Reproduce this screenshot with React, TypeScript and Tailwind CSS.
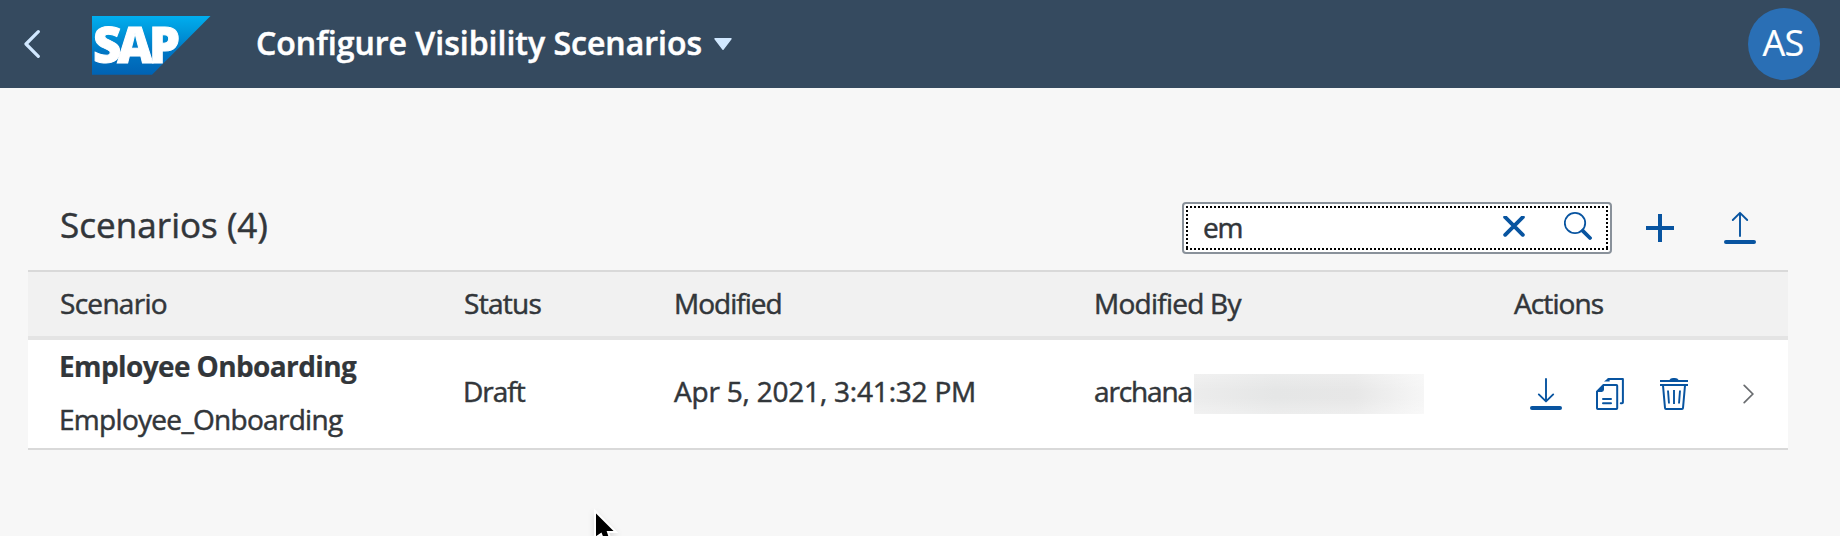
import type { ReactNode } from "react";

const columns = "grid grid-cols-[404px_210px_420px_420px_1fr]";

function Icon({ w, h, label, children }: { w: number; h: number; label: string; children: ReactNode }) {
  return (
    <svg
      width={w}
      height={h}
      viewBox={`0 0 ${w} ${h}`}
      aria-label={label}
      fill="none"
      stroke="#0854a0"
      strokeWidth="2"
      strokeLinecap="round"
      strokeLinejoin="round"
      className="block shrink-0"
    >
      {children}
    </svg>
  );
}

function SapLogo() {
  return (
    <svg width="120" height="60" viewBox="0 0 120 60" className="mt-1 ml-[52px] block shrink-0 overflow-visible" aria-label="SAP">
      <defs>
        <linearGradient id="sap" x1="0" y1="0" x2="0" y2="1">
          <stop offset="0" stopColor="#00aeef" />
          <stop offset="0.25" stopColor="#0099dc" />
          <stop offset="0.6" stopColor="#0077c5" />
          <stop offset="1" stopColor="#0062b3" />
        </linearGradient>
      </defs>
      <path d="M0 0H118.5L60 58.8H0Z" fill="url(#sap)" />
      <text
        x="1"
        y="46.5"
        textLength="87"
        lengthAdjust="spacing"
        className="font-['Open_Sans'] font-extrabold tracking-normal [-webkit-text-stroke:0]"
        fill="#fff"
        stroke="#fff"
        strokeWidth="1"
        fontSize="49"
      >
        SAP
      </text>
    </svg>
  );
}

function Header() {
  return (
    <header className="flex h-[88px] items-center bg-[#354a5f] pr-5 pl-6">
      <svg width="16" height="28" viewBox="0 0 16 28" className="block shrink-0" aria-label="Back">
        <path d="M14.3 1.7L2 14L14.3 26.3" fill="none" stroke="#d1e8ff" strokeWidth="3.2" strokeLinecap="round" strokeLinejoin="round" />
      </svg>
      <SapLogo />
      <h1 className="ml-11 pb-0.5 text-[32px] leading-10 font-semibold tracking-[0px] whitespace-nowrap text-white [-webkit-text-stroke:0.5px_#fff]">
        Configure Visibility Scenarios
      </h1>
      <svg width="18" height="12" viewBox="0 0 18 12" className="ml-3 block shrink-0" aria-hidden="true">
        <path d="M1 0.8H17L9 11.2Z" fill="#d1e8ff" stroke="#d1e8ff" strokeWidth="1.4" strokeLinejoin="round" />
      </svg>
      <div className="ml-auto flex size-[72px] items-center justify-center rounded-full bg-[#2a6fb5] pr-0.5 pb-0.5 text-4xl text-white [-webkit-text-stroke:0.2px_#fff]">
        AS
      </div>
    </header>
  );
}

function SearchField() {
  return (
    <div className="h-[52px] w-[430px] shrink-0 rounded-[4px] border-2 border-[#89919a] bg-white p-0.5">
      <div className="flex h-full items-center bg-[repeating-linear-gradient(90deg,#000_0_2px,transparent_2px_4px),repeating-linear-gradient(90deg,#000_0_2px,transparent_2px_4px),repeating-linear-gradient(180deg,#000_0_2px,transparent_2px_4px),repeating-linear-gradient(180deg,#000_0_2px,transparent_2px_4px)] bg-[length:100%_2px,100%_2px,2px_100%,2px_100%] bg-[position:0_0,0_100%,0_0,100%_0] bg-no-repeat pr-4 pl-[17px]">
        <span className="pb-0.5 tracking-[-1.3px]">em</span>
        <div className="ml-auto flex items-center gap-[39px]">
          <div className="pb-0.5">
            <Icon w={22} h={22} label="Clear">
              <path d="M2.2 1.2L19.8 18.8M19.8 1.2L2.2 18.8" strokeWidth="3.9" />
            </Icon>
          </div>
          <div className="pb-0.5">
            <Icon w={28} h={32} label="Search">
              <circle cx="11" cy="12" r="10.2" strokeWidth="1.8" />
              <path d="M18.8 19.8L26 27" strokeWidth="3.8" />
            </Icon>
          </div>
        </div>
      </div>
    </div>
  );
}

function Toolbar() {
  return (
    <div className="mr-[52px] ml-7 flex h-[182px] items-end pr-8 pb-4 pl-8">
      <h2 className="pb-[3px] text-[35px] leading-[52px] tracking-[0.05px]">Scenarios (4)</h2>
      <div className="ml-auto flex items-center">
        <SearchField />
        <div className="ml-[34px]">
          <Icon w={28} h={28} label="Add">
            <path d="M14 2V26M2 14H26" strokeWidth="4" strokeLinecap="square" strokeLinejoin="miter" />
          </Icon>
        </div>
        <div className="ml-[50px]">
          <Icon w={32} h={34} label="Upload">
            <path d="M16 2V25M8.8 9L16 1.8L23.2 9" strokeWidth="1.9" />
            <path d="M2 31H30" strokeWidth="4" />
          </Icon>
        </div>
      </div>
    </div>
  );
}

function RowActions() {
  return (
    <div className="flex h-full items-center pl-4">
      <Icon w={32} h={32} label="Download">
        <path d="M16 1V23M8.8 16.4L16 23.4L23.2 16.4" strokeWidth="1.9" />
        <path d="M2 30H30" strokeWidth="4" />
      </Icon>
      <div className="ml-[34px]">
        <Icon w={28} h={32} label="Copy">
          <path d="M12.5 1H26.9V24.6Q26.9 25.2 26 25.2H24.8" />
          <path d="M8 3.6L12 0.2L13.6 1V3.6Z" fill="#0854a0" stroke="none" />
          <path d="M7.6 7H20.4Q21.2 7 21.2 7.8V30.2Q21.2 31 20.4 31H1.8Q1 31 1 30.2V13.6Z" />
          <path d="M1 13.4L7.4 7V11.6Q7.4 13.4 5.6 13.4Z" fill="#0854a0" strokeWidth="1.2" />
          <path d="M7 21H15M7 25.2H15" />
        </Icon>
      </div>
      <div className="ml-9">
        <Icon w={28} h={32} label="Delete">
          <path d="M0 3H28M0 7H28" strokeLinecap="butt" />
          <path d="M9 2.4Q10.5 0 13 0H15Q17.5 0 19 2.4Z" fill="#0854a0" stroke="none" />
          <path d="M3 7.5L5 30Q5.1 31 6 31H22Q22.9 31 23 30L25 7.5" strokeLinecap="butt" />
          <path d="M8 12.5L9 25.5M14 12V26M20 12.5L19 25.5" strokeWidth="1.9" strokeLinecap="butt" />
        </Icon>
      </div>
      <svg width="12" height="20" viewBox="0 0 12 20" className="ml-[55px] block" aria-hidden="true">
        <path d="M1.2 1.4L9.8 10L1.2 18.6" fill="none" stroke="#6a6d70" strokeWidth="1.7" strokeLinecap="round" />
      </svg>
    </div>
  );
}

function Table() {
  return (
    <section className="ml-7 w-[1760px]">
      <div className={`${columns} h-[70px] items-center border-t-2 border-b-4 border-t-[#d9d9d9] border-b-[#e4e4e4] bg-[#f1f1f1] pb-0.5 pl-8`}>
        <span>Scenario</span>
        <span>Status</span>
        <span className="tracking-[-1px]">Modified</span>
        <span className="tracking-[-0.75px]">Modified By</span>
        <span className="tracking-[-0.9px]">Actions</span>
      </div>
      <div className={`${columns} h-[110px] items-center border-b-2 border-[#d9d9d9] bg-white pl-8`}>
        <div className="-ml-px pb-0.5 leading-[53px]">
          <p className="font-bold tracking-[-0.62px] [-webkit-text-stroke:0.2px_#32363a]">Employee Onboarding</p>
          <p className="tracking-[-0.7px]">Employee_Onboarding</p>
        </div>
        <span className="-ml-px pb-1.5 tracking-[-1px]">Draft</span>
        <span className="pb-1.5 tracking-[-0.2px]">Apr 5, 2021, 3:41:32 PM</span>
        <div className="flex items-center">
          <span className="w-[100px] pb-1.5 tracking-[-1.15px]">archana</span>
          <div className="h-10 w-[230px] bg-[linear-gradient(90deg,#ececec_0%,#e5e6e6_35%,#e7e7e7_70%,#f6f6f6_100%)]">
            <div className="size-full bg-[linear-gradient(180deg,rgba(255,255,255,0.25),transparent_40%,transparent_60%,rgba(255,255,255,0.3))]" />
          </div>
        </div>
        <RowActions />
      </div>
    </section>
  );
}

export default function App() {
  return (
    <div className="relative h-[536px] w-[1840px] overflow-hidden bg-[#f7f7f7] font-['Open_Sans',sans-serif] text-[28px] leading-9 tracking-[-0.7px] text-[#32363a] [-webkit-text-stroke:0.5px_#32363a]">
      <Header />
      <Toolbar />
      <Table />
      <svg width="32" height="40" viewBox="0 0 32 40" className="absolute top-[508px] left-[590px] drop-shadow-md" aria-hidden="true">
        <path d="M5 3V30L11 26L15 36H22L18 24H26Z" fill="#000" stroke="#fff" strokeWidth="2" />
      </svg>
    </div>
  );
}
